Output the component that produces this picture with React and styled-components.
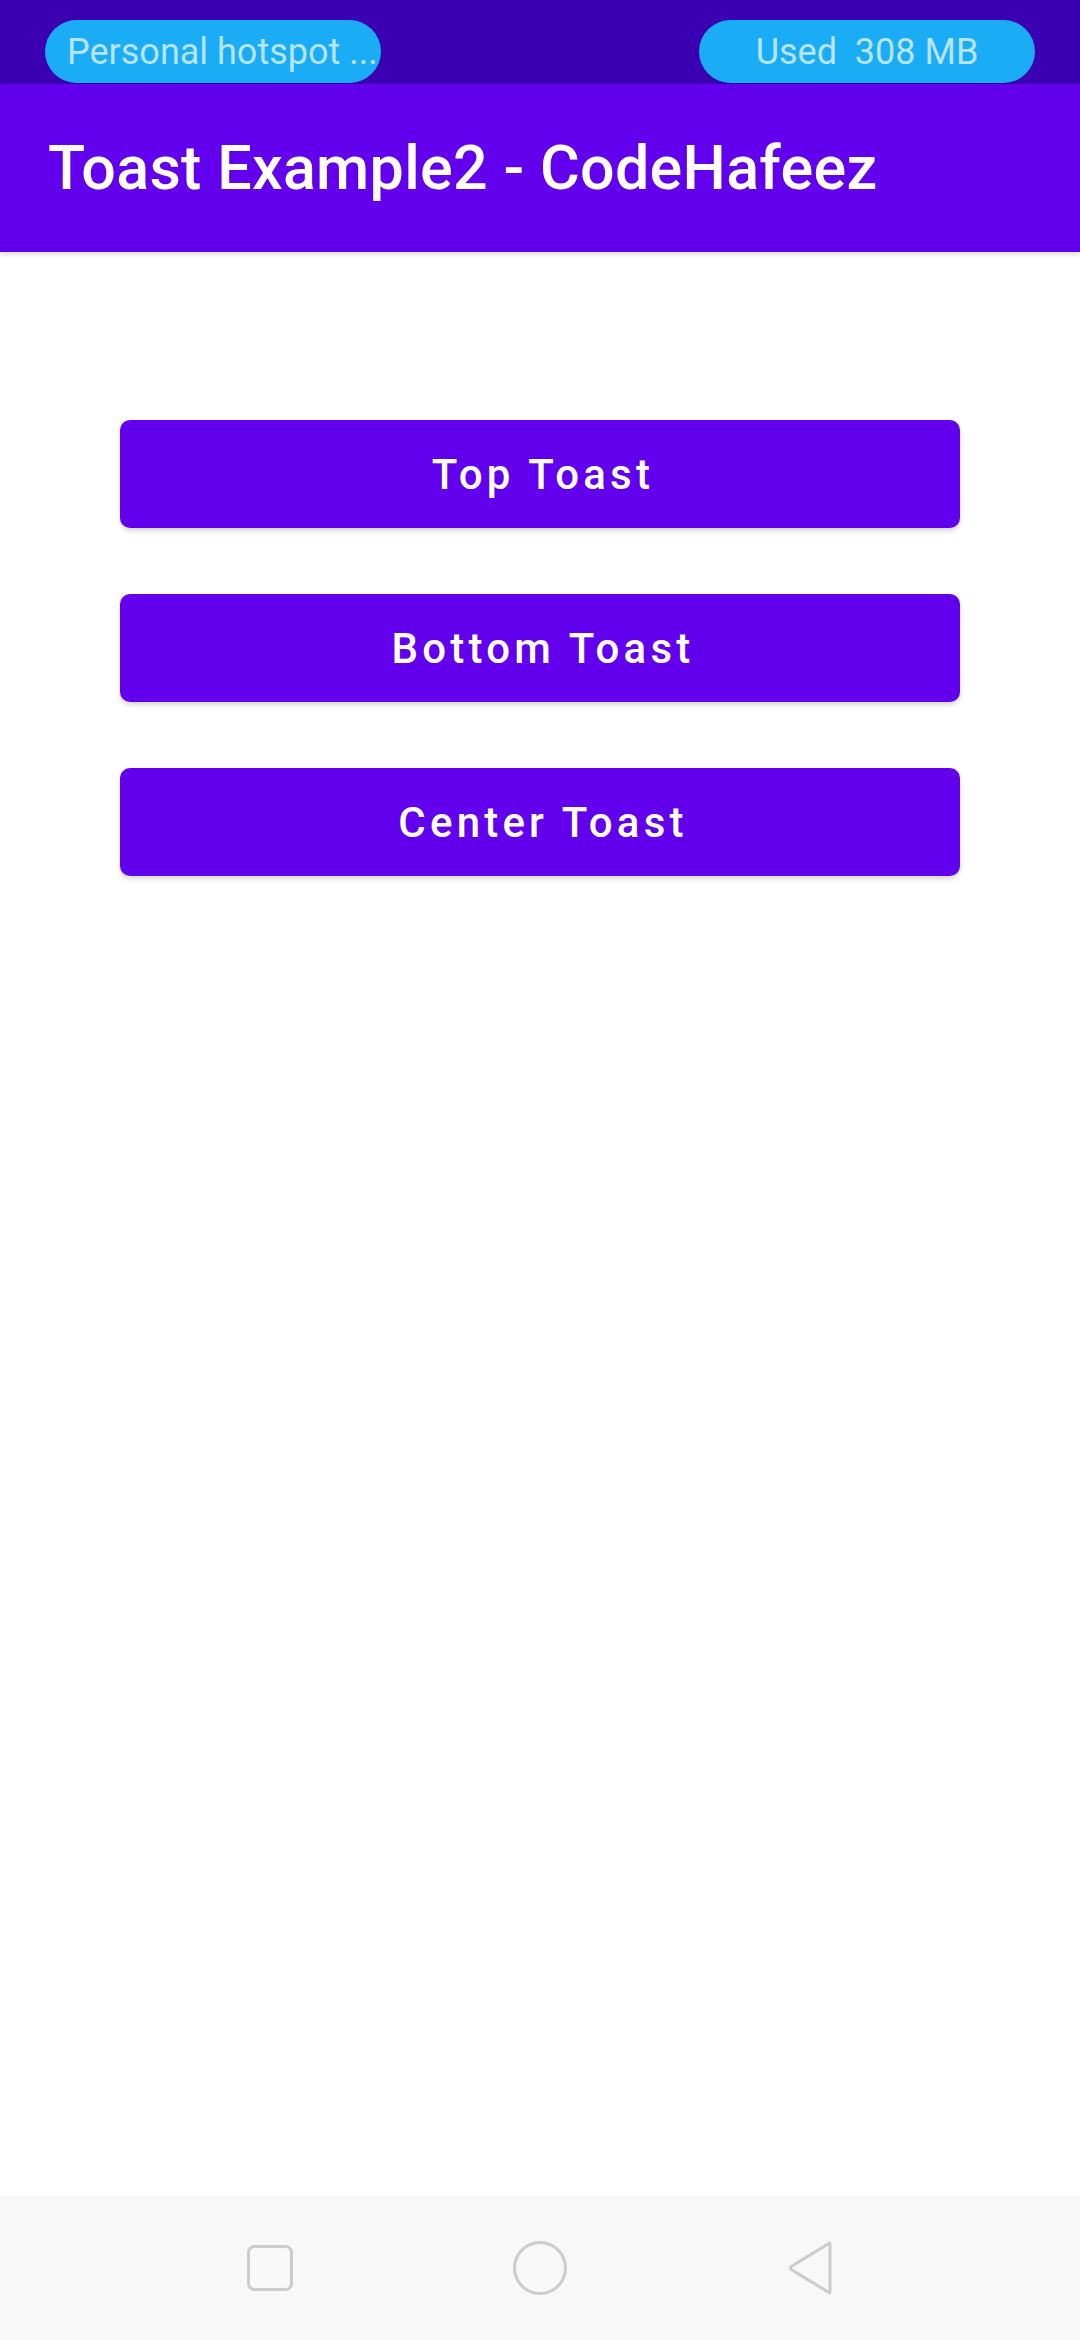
import React from "react"
import styled, { createGlobalStyle } from "styled-components"

const GlobalStyle = createGlobalStyle`
  html, body {
    margin: 0;
    padding: 0;
    background: #ffffff;
  }
  body {
    font-family: Roboto, "Noto Sans", sans-serif;
  }
`

const Screen = styled.div`
  width: 1080px;
  height: 2340px;
  display: flex;
  flex-direction: column;
  background: #ffffff;
  overflow: hidden;
`

const StatusBar = styled.div`
  height: 84px;
  background: #3a00b2;
  display: flex;
  align-items: flex-end;
  justify-content: space-between;
  padding: 0 45px 1px 45px;
  box-sizing: border-box;
`

const Pill = styled.div`
  width: 336px;
  height: 63px;
  border-radius: 32px;
  background: #1aacf5;
  color: #b8e4fb;
  font-size: 36px;
  display: flex;
  align-items: center;
  justify-content: ${(p) => (p.$center ? "center" : "flex-start")};
  padding-left: ${(p) => (p.$center ? "0" : "22px")};
  box-sizing: border-box;
  white-space: nowrap;
  overflow: hidden;
`

const AppBar = styled.header`
  height: 168px;
  background: #6200ee;
  display: flex;
  align-items: center;
  padding-left: 48px;
  box-shadow: 0 3px 4px rgba(0, 0, 0, 0.12);
  position: relative;
  z-index: 1;
`

const Title = styled.h1`
  margin: 0;
  color: #ffffff;
  font-size: 61px;
  font-weight: 500;
  letter-spacing: 0.3px;
`

const Content = styled.main`
  flex: 1;
  display: flex;
  flex-direction: column;
  align-items: center;
  gap: 66px;
  padding-top: 168px;
`

const ToastButton = styled.button`
  width: 840px;
  height: 108px;
  border: none;
  border-radius: 10px;
  background: #6200ee;
  color: #ffffff;
  font-family: Roboto, sans-serif;
  font-size: 42px;
  font-weight: 500;
  letter-spacing: 4.2px;
  padding: 0 0 0 6px;
  box-shadow: 0 3px 5px rgba(0, 0, 0, 0.16);
  cursor: pointer;
`

const NavBar = styled.nav`
  height: 144px;
  background: #f8f8f8;
  display: flex;
  align-items: center;
  justify-content: center;
  gap: 214px;
`

const NavIcon = styled.svg`
  display: block;
`

function App() {
  return (
    <Screen>
      <GlobalStyle />
      <StatusBar>
        <Pill>Personal hotspot ...</Pill>
        <Pill $center>Used&nbsp;&nbsp;308 MB</Pill>
      </StatusBar>
      <AppBar>
        <Title>Toast Example2 - CodeHafeez</Title>
      </AppBar>
      <Content>
        <ToastButton>Top Toast</ToastButton>
        <ToastButton>Bottom Toast</ToastButton>
        <ToastButton>Center Toast</ToastButton>
      </Content>
      <NavBar>
        <NavIcon width="56" height="56" viewBox="0 0 56 56">
          <rect x="6.5" y="6.5" width="43" height="43" rx="6" fill="none" stroke="#cccccc" strokeWidth="3" />
        </NavIcon>
        <NavIcon width="56" height="56" viewBox="0 0 56 56">
          <circle cx="28" cy="28" r="25.5" fill="none" stroke="#cccccc" strokeWidth="3" />
        </NavIcon>
        <NavIcon width="56" height="56" viewBox="0 0 56 56">
          <path d="M48 4 L48 52 Q48 54 46 52 L10 30 Q7 28 10 26 L46 4 Q48 2 48 4 Z" fill="none" stroke="#cccccc" strokeWidth="3" strokeLinejoin="round" />
        </NavIcon>
      </NavBar>
    </Screen>
  )
}

export default App
